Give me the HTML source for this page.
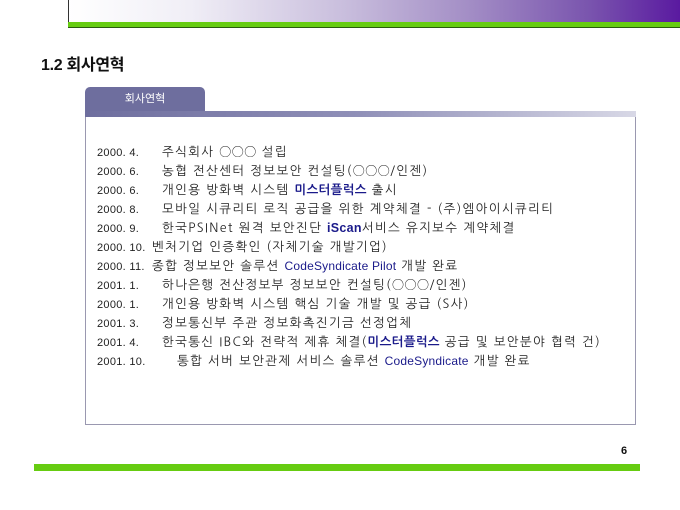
<!DOCTYPE html>
<html><head><meta charset="utf-8"><style>
body{margin:0;width:680px;height:510px;background:#fff;position:relative;overflow:hidden;font-family:"Liberation Sans","Noto Sans CJK KR","NanumGothic",sans-serif}
.a{position:absolute}
.t{left:97px;font-size:12.5px;color:#222;white-space:pre;line-height:14px;font-family:"NanumGothic","Noto Sans CJK KR",sans-serif;letter-spacing:1.35px}
.t .n{font-family:"Liberation Sans",sans-serif;font-size:11px;letter-spacing:0.3px;display:inline-block;width:65px}
.t .m{font-family:"Liberation Sans",sans-serif;font-size:11px;letter-spacing:0.3px;display:inline-block;width:55px}
.b{color:#1a1a8a;font-weight:bold;font-family:"Liberation Sans","NanumGothic",sans-serif;letter-spacing:0.3px}
.c{color:#1a1a8a;font-family:"Liberation Sans",sans-serif;letter-spacing:0.2px;font-size:12px}
.o{font-family:"Noto Sans CJK KR",sans-serif;font-size:12px;letter-spacing:0.5px}
</style></head><body>
<div class="a" style="left:68px;top:0;width:612px;height:22px;background:linear-gradient(90deg,#fff 0%,#f0eef6 20%,#c9bedd 45%,#a48fc6 65%,#7a55ae 85%,#5a1aa0 100%)"></div>
<div class="a" style="left:68px;top:0;width:1px;height:28px;background:#333"></div>
<div class="a" style="left:68px;top:22px;width:612px;height:5px;background:#66cc11"></div>
<div class="a" style="left:68px;top:27px;width:612px;height:1px;background:#2a5a10"></div>
<div class="a" style="left:41px;top:51px;font-size:16px;color:#111;letter-spacing:-0.3px"><b>1.2</b> <span style="font-weight:bold">회사연혁</span></div>
<div class="a" style="left:85px;top:87px;width:120px;height:24px;background:#6e6e9e;border-radius:5px 5px 0 0;color:#fff;font-size:11px;text-align:center;line-height:24px">회사연혁</div>
<div class="a" style="left:85px;top:111px;width:551px;height:6px;background:linear-gradient(90deg,#6e6e9e,#9090b8 50%,#d8d8e6)"></div>
<div class="a" style="left:85px;top:117px;width:549px;height:307px;border:1px solid #9a98b0;border-top:none"></div>
<div class="a t" style="top:145px"><span class="n">2000. 4.</span>주식회사 <span class="o">○○○</span> 설립</div>
<div class="a t" style="top:164px"><span class="n">2000. 6.</span>농협 전산센터 정보보안 컨설팅(<span class="o">○○○</span>/인젠)</div>
<div class="a t" style="top:183px"><span class="n">2000. 6.</span>개인용 방화벽 시스템 <span class="b">미스터플럭스</span> 출시</div>
<div class="a t" style="top:202px"><span class="n">2000. 8.</span>모바일 시큐리티 로직 공급을 위한 계약체결 - (주)엠아이시큐리티</div>
<div class="a t" style="top:221px"><span class="n">2000. 9.</span>한국PSINet 원격 보안진단 <span class="b">iScan</span>서비스 유지보수 계약체결</div>
<div class="a t" style="top:240px"><span class="m">2000. 10.</span>벤처기업 인증확인 (자체기술 개발기업)</div>
<div class="a t" style="top:259px"><span class="m">2000. 11.</span>종합 정보보안 솔루션 <span class="c">CodeSyndicate Pilot</span> 개발 완료</div>
<div class="a t" style="top:278px"><span class="n">2001. 1.</span>하나은행 전산정보부 정보보안 컨설팅(<span class="o">○○○</span>/인젠)</div>
<div class="a t" style="top:297px"><span class="n">2000. 1.</span>개인용 방화벽 시스템 핵심 기술 개발 및 공급 (S사)</div>
<div class="a t" style="top:316px"><span class="n">2001. 3.</span>정보통신부 주관 정보화촉진기금 선정업체</div>
<div class="a t" style="top:335px"><span class="n">2001. 4.</span>한국통신 IBC와 전략적 제휴 체결(<span class="b">미스터플럭스</span> 공급 및 보안분야 협력 건)</div>
<div class="a t" style="top:354px"><span class="n" style="width:80px">2001. 10.</span>통합 서버 보안관제 서비스 솔루션 <span class="c">CodeSyndicate</span> 개발 완료</div>
<div class="a" style="left:621px;top:445px;font-size:11px;font-weight:bold;color:#111">6</div>
<div class="a" style="left:34px;top:464px;width:606px;height:7px;background:#66cc11"></div>
</body></html>
